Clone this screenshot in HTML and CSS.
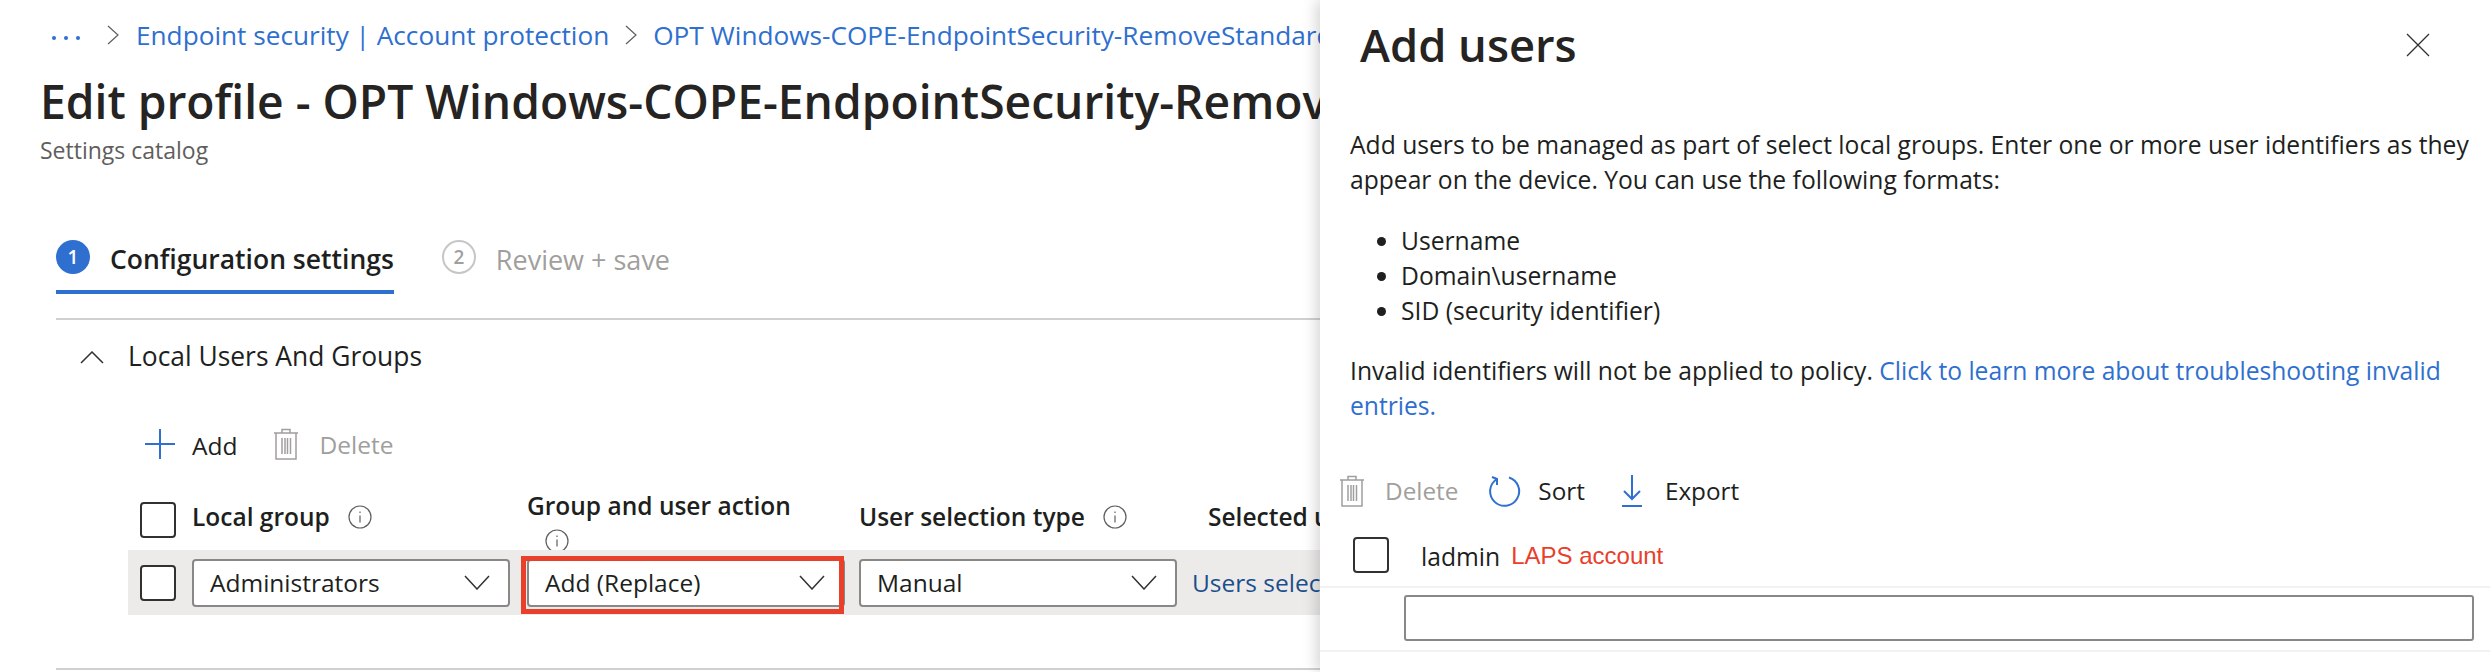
FILE: index.html
```html
<!DOCTYPE html>
<html lang="en">
<head>
<meta charset="utf-8">
<title>Edit profile</title>
<link rel="stylesheet" href="styles.css">
</head>
<body>
<div class="page">
  <main class="main">
    <nav class="crumbs">
      <span class="dots"><i></i><i></i><i></i></span>
      <svg class="crumb-chev" viewBox="0 0 12 20"><path d="M1 1l10 9-10 9"/></svg>
      <a class="link">Endpoint security | Account protection</a>
      <svg class="crumb-chev" viewBox="0 0 12 20"><path d="M1 1l10 9-10 9"/></svg>
      <a class="link">OPT Windows-COPE-EndpointSecurity-RemoveStandardUsers</a>
    </nav>
    <h1 class="title">Edit profile - OPT Windows-COPE-EndpointSecurity-RemoveStandardUsers</h1>
    <div class="subtitle">Settings catalog</div>
    <div class="tabs">
      <div class="tab tab-active"><span class="step step-on">1</span>Configuration settings</div>
      <div class="tab tab-off"><span class="step step-off">2</span>Review + save</div>
    </div>
    <div class="section-head">
      <svg class="sec-chev" viewBox="0 0 24 13"><path d="M1 12L12 1l11 11"/></svg>
      <span>Local Users And Groups</span>
    </div>
    <div class="toolbar">
      <button class="tool tool-add">
        <svg class="ico-plus" viewBox="0 0 30 30"><path d="M15 0v30M0 15h30"/></svg>Add
      </button>
      <button class="tool tool-dim">
        <svg class="ico-trash" viewBox="0 0 26 32"><path d="M1 5h24M9 5V1.500h8V5M3 5v26h20V5M9 10v16M12 10v16M14.500 10v16M17.500 10v16"/></svg>Delete
      </button>
    </div>
    <div class="thead">
      <div class="c-check"><span class="box"></span></div>
      <div class="c-group th">Local group<svg class="info" viewBox="0 0 24 24"><circle cx="12" cy="12" r="11"/><path d="M12 10.500v7M12 6.500v1.500"/></svg></div>
      <div class="c-action th th-stack">Group and user action<svg class="info info-low" viewBox="0 0 24 24"><circle cx="12" cy="12" r="11"/><path d="M12 10.500v7M12 6.500v1.500"/></svg></div>
      <div class="c-type th">User selection type<svg class="info" viewBox="0 0 24 24"><circle cx="12" cy="12" r="11"/><path d="M12 10.500v7M12 6.500v1.500"/></svg></div>
      <div class="c-users th th-users">Selected users</div>
    </div>
    <div class="trow">
      <div class="c-check"><span class="box"></span></div>
      <div class="c-group"><div class="select">Administrators<svg class="sel-chev" viewBox="0 0 26 15"><path d="M1 1l12 13L25 1"/></svg></div></div>
      <div class="c-action"><div class="select select-marked">Add (Replace)<svg class="sel-chev" viewBox="0 0 26 15"><path d="M1 1l12 13L25 1"/></svg><span class="mark"></span></div></div>
      <div class="c-type"><div class="select">Manual<svg class="sel-chev" viewBox="0 0 26 15"><path d="M1 1l12 13L25 1"/></svg></div></div>
      <div class="c-users"><a class="users-link">Users selected</a></div>
    </div>
    <div class="bottom-rule"></div>
  </main>
  <aside class="panel">
    <header class="panel-head">
      <h2 class="panel-title">Add users</h2>
      <svg class="close" viewBox="0 0 24 24"><path d="M1 1l22 22M23 1L1 23"/></svg>
    </header>
    <div class="panel-body">
      <p class="intro">Add users to be managed as part of select local groups. Enter one or more user identifiers as they appear on the device. You can use the following formats:</p>
      <ul class="formats">
        <li>Username</li>
        <li>Domain\username</li>
        <li>SID (security identifier)</li>
      </ul>
      <p class="invalid">Invalid identifiers will not be applied to policy. <a class="link">Click to learn more about troubleshooting invalid entries.</a></p>
    </div>
    <div class="panel-tools">
      <button class="tool tool-dim">
        <svg class="ico-trash" viewBox="0 0 26 32"><path d="M1 5h24M9 5V1.500h8V5M3 5v26h20V5M9 10v16M12 10v16M14.500 10v16M17.500 10v16"/></svg>Delete
      </button>
      <button class="tool tool-sort">
        <svg class="ico-sort" viewBox="0 0 32 32"><path d="M20 2.500A14.500 14.500 0 1 1 8 4M3 2l5 2v6"/></svg>Sort
      </button>
      <button class="tool tool-export">
        <svg class="ico-export" viewBox="0 0 20 32"><path d="M10 0v24M2 16l8 8 8-8M0 31h20"/></svg>Export
      </button>
    </div>
    <div class="user-row">
      <span class="box"></span>
      <span class="user-name">ladmin</span>
      <span class="user-note">LAPS account</span>
    </div>
    <div class="input-row"><div class="input"></div></div>
  </aside>
</div>
</body>
</html>
```
FILE: styles.css
```css
* { box-sizing: border-box; }
html, body { margin: 0; height: 100%; }
body { font-family: "Open Sans", "Noto Sans", sans-serif; color: #201f1e; background: #fff; overflow: hidden; }
.page { display: flex; width: 2490px; height: 672px; overflow: hidden; }
a { text-decoration: none; }
.link { color: #2f6fcf; }
button { font: inherit; border: 0; background: none; padding: 0; color: inherit; }

.main { flex: 0 0 1320px; width: 1320px; overflow: hidden; white-space: nowrap; font-size: 24.500px; }
.crumbs { display: flex; align-items: center; height: 70px; padding-left: 52px; font-size: 26.200px; }
.dots { display: flex; gap: 8px; margin-top: 6px; }
.dots i { width: 4px; height: 4px; border-radius: 50%; background: #2f6fcf; }
.crumb-chev { width: 12px; height: 20px; fill: none; stroke: #605e5c; stroke-width: 1.200; flex: none; margin: 0 17px 0 27px; }
.crumb-chev ~ .crumb-chev { margin-left: 16px; margin-right: 16px; }
.title { margin: 6px 0 0 40px; font-size: 46.200px; line-height: 52px; font-weight: 600; color: #252423; }
.subtitle { margin: 6px 0 0 40px; font-size: 23px; line-height: 32px; color: #605e5c; }

.tabs { display: flex; margin: 70px 0 0 56px; padding-bottom: 24px; border-bottom: 2px solid #d2d0ce; gap: 48px; font-size: 26.500px; }
.tab { display: flex; align-items: center; height: 58px; padding-bottom: 8px; gap: 20px; }
.tab-active { border-bottom: 4px solid #2f6fcf; font-weight: 600; color: #201f1e; }
.tab-off { color: #a19f9d; font-size: 27px; padding-bottom: 12px; }
.step { width: 34px; height: 34px; border-radius: 50%; display: flex; align-items: center; justify-content: center; font-size: 19px; font-weight: 600; margin-top: -4px; }
.step-on { background: #2f6fcf; color: #fff; }
.step-off { border: 2px solid #c8c6c4; color: #a19f9d; }

.section-head { display: flex; align-items: center; height: 74px; padding-left: 80px; gap: 24px; font-size: 26.400px; }
.section-head span { margin-top: -2px; }
.sec-chev { width: 24px; height: 13px; fill: none; stroke: #323130; stroke-width: 1.500; }

.toolbar { display: flex; align-items: center; height: 40px; margin-top: 30px; padding-left: 145px; gap: 36px; }
.tool { display: inline-flex; align-items: center; white-space: nowrap; line-height: 36px; }
.tool-add { gap: 17px; padding-top: 3px; }
.tool-dim { color: #a19f9d; gap: 20px; }
.toolbar .tool-dim { padding-top: 2px; }
.toolbar .ico-trash { margin-top: -2px; }
.ico-plus { width: 30px; height: 30px; fill: none; stroke: #2f6fcf; stroke-width: 2; margin-top: -3px; }
.ico-trash { width: 26px; height: 32px; fill: none; stroke: #a19f9d; stroke-width: 1.500; }

.thead, .trow { display: flex; margin-left: 128px; }
.thead { height: 60px; margin-top: 26px; overflow: hidden; }
.trow { height: 65px; background: #edebe9; align-items: center; }
.c-check { flex: 0 0 64px; padding-left: 12px; display: flex; align-items: center; }
.c-group { flex: 0 0 335px; }
.c-action { flex: 0 0 332px; }
.c-type { flex: 0 0 334px; }
.c-users { flex: 1 1 auto; }
.th { display: flex; align-items: center; font-weight: 600; padding-bottom: 7px; }
.th-stack { flex-direction: column; align-items: flex-start; padding-bottom: 0; line-height: 32px; }
.th-users { padding-left: 15px; }
.box { display: block; width: 36px; height: 36px; border: 2px solid #323130; border-radius: 4px; background: #fff; flex: none; }
.info { width: 24px; height: 24px; fill: none; stroke: #605e5c; stroke-width: 1.200; margin-left: 18px; flex: none; }
.info-low { margin-left: 18px; margin-top: 7px; }

.select { position: relative; display: flex; align-items: center; justify-content: space-between; width: 318px; height: 48px; padding: 0 18px 0 16px; background: #fff; border: 2px solid #8a8886; border-radius: 4px; }
.sel-chev { width: 26px; height: 15px; fill: none; stroke: #323130; stroke-width: 1.500; flex: none; }
.mark { position: absolute; top: -5px; bottom: -9px; left: -8px; right: -1px; border: 5px solid #e8402a; }
.users-link { color: #1c4f8c; margin-left: -1px; }

.bottom-rule { margin: 53px 0 0 56px; border-top: 2px solid #d2d0ce; }

.panel { position: relative; flex: 0 0 1170px; width: 1170px; height: 672px; background: #fff; box-shadow: -3px 0 14px rgba(0,0,0,.18); font-size: 24.650px; }
.panel-head { display: flex; align-items: center; justify-content: space-between; height: 90px; padding: 0 60px 0 40px; }
.panel-title { margin: 0; font-size: 45.300px; font-weight: 600; color: #252423; line-height: 56px; }
.close { width: 24px; height: 24px; fill: none; stroke: #323130; stroke-width: 1.300; }
.panel-body { padding: 0 20px 0 30px; line-height: 35px; }
.intro { margin: 37px 0 0; }
.formats { margin: 26px 0 0; padding-left: 51px; }
.invalid { margin: 25px 0 0; }

.panel-tools { display: flex; align-items: center; height: 40px; margin-top: 48px; padding-left: 19px; gap: 31px; font-size: 24.300px; }
.tool-sort { gap: 17px; }
.tool-export { gap: 23px; margin-left: 6px; }
.ico-sort { width: 32px; height: 32px; fill: none; stroke: #2f6fcf; stroke-width: 2; }
.ico-export { width: 20px; height: 32px; fill: none; stroke: #2f6fcf; stroke-width: 2; }

.user-row { display: flex; align-items: center; height: 77px; padding: 13px 0 0 33px; border-bottom: 2px solid #f3f2f1; }
.user-name { margin-left: 32px; margin-top: 2px; }
.user-note { margin-left: 11px; margin-top: 2px; color: #e8402a; font-family: "Liberation Sans", Arial, sans-serif; font-size: 24px; }
.input-row { height: 64px; padding: 7px 16px 9px 84px; border-bottom: 2px solid #f3f2f1; }
.input { height: 46px; border: 2px solid #8a8886; border-radius: 3px; }
```
